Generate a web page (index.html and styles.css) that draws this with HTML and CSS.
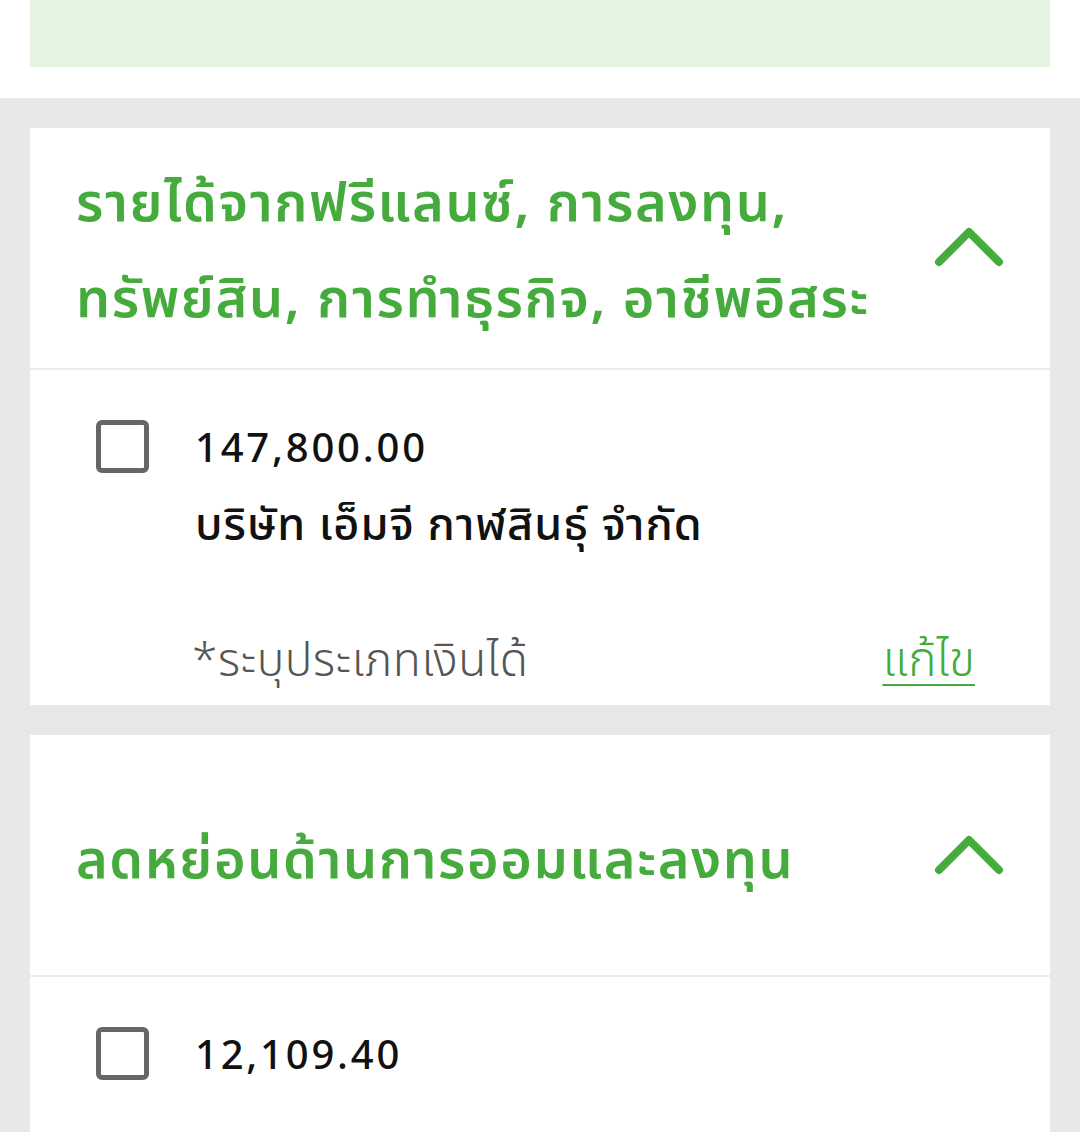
FILE: index.html
```html
<!DOCTYPE html>
<html>
  <head>
    <meta charset="utf-8">
    <title>รายการเงินได้</title>
    <link rel="stylesheet" href="styles.css">
  </head>
  <body>
    <div class="top">
      <div class="notice"></div>
    </div>
    <div class="list">
      <div class="card">
        <div class="card-head">
          <h2 class="title">รายได้จากฟรีแลนซ์, การลงทุน,<br/>ทรัพย์สิน, การทำธุรกิจ, อาชีพอิสระ</h2>
          <svg class="chevron" viewBox="0 0 72 44"><path d="M6 38 L36 8 L66 38"/></svg>
        </div>
        <div class="card-body">
          <div class="item">
            <span class="check"></span>
            <div class="info">
              <div class="amount">147,800.00</div>
              <div class="payer">บริษัท เอ็มจี กาฬสินธุ์ จำกัด</div>
            </div>
          </div>
          <div class="foot">
            <span class="hint">*ระบุประเภทเงินได้</span>
            <a class="edit" href="#">แก้ไข</a>
          </div>
        </div>
      </div>
      <div class="card">
        <div class="card-head single">
          <h2 class="title">ลดหย่อนด้านการออมและลงทุน</h2>
          <svg class="chevron" viewBox="0 0 72 44"><path d="M6 38 L36 8 L66 38"/></svg>
        </div>
        <div class="card-body">
          <div class="item">
            <span class="check"></span>
            <div class="info">
              <div class="amount">12,109.40</div>
            </div>
          </div>
        </div>
      </div>
    </div>
  </body>
</html>
```

FILE: styles.css
```css
* {
    margin: 0;
    padding: 0;
    box-sizing: border-box;
}
body {
    width: 1080px;
    height: 1132px;
    overflow: hidden;
    background: #e8e8e8;
    font-family: "Noto Sans Thai", "Noto Sans", "Liberation Sans", sans-serif;
    color: #111;
}
.top {
    background: #fff;
    padding: 0 30px 31px;
}
.notice {
    height: 67px;
    background: #e4f4e1;
}
.list {
    padding: 30px 30px 0;
    display: flex;
    flex-direction: column;
    gap: 30px;
}
.card {
    background: #fff;
}
.card-head {
    height: 242px;
    display: flex;
    align-items: center;
    justify-content: space-between;
    padding: 0 46px 0 46px;
    border-bottom: 2px solid #ececec;
}
.title {
    font-size: 54px;
    letter-spacing: 1.6px;
    line-height: 96px;
    font-weight: 600;
    color: #45ab3c;
    margin-top: 10px;
}
.single .title {
    margin-top: 14px;
}
.chevron {
    width: 72px;
    height: 44px;
    margin-top: -4px;
    margin-right: -1px;
}
.single .chevron {
    margin-top: -2px;
}
.chevron path {
    fill: none;
    stroke: #45ab3c;
    stroke-width: 8;
    stroke-linecap: round;
    stroke-linejoin: round;
}
.card-body {
    padding: 50px 75px 13px 66px;
}
.card:last-child .card-body {
    min-height: 155px;
}
.item {
    display: flex;
    gap: 46px;
}
.check {
    width: 53px;
    height: 53px;
    border: 5px solid #666;
    border-radius: 6px;
    flex-shrink: 0;
}
.info {
    padding-top: 4px;
}
.amount {
    font-size: 40px;
    letter-spacing: 2.8px;
    line-height: 52px;
    font-weight: 500;
}
.payer {
    font-size: 45px;
    letter-spacing: 1px;
    line-height: 56px;
    font-weight: 500;
    margin-top: 22px;
}
.foot {
    display: flex;
    justify-content: space-between;
    align-items: baseline;
    margin-top: 78px;
    padding-left: 96px;
    line-height: 60px;
    height: 60px;
}
.hint {
    font-size: 46px;
    letter-spacing: 0.6px;
    font-weight: 300;
    color: #555;
}
.edit {
    font-size: 48px;
    font-weight: 300;
    color: #45ab3c;
    text-decoration: underline;
    text-decoration-thickness: 2px;
    text-underline-offset: 8px;
}
```
